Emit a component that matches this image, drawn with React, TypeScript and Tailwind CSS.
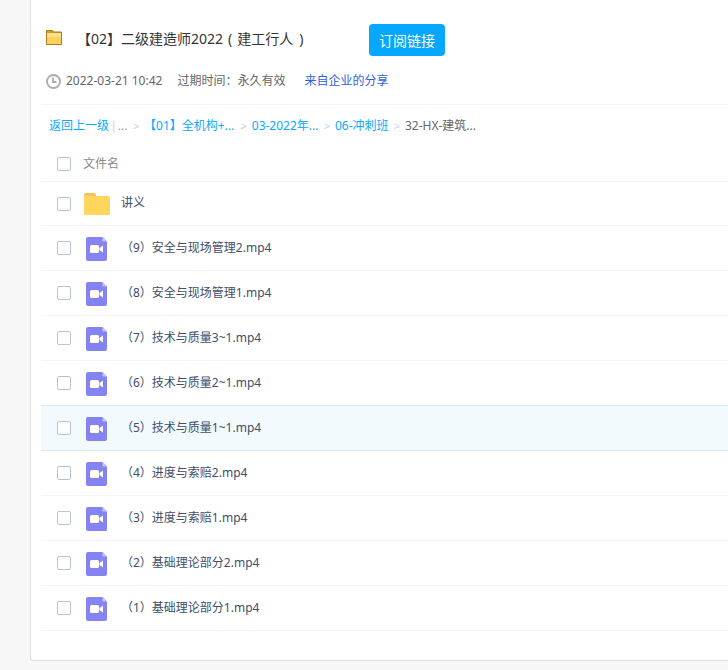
import React from 'react'

const files = [
  '（9）安全与现场管理2.mp4',
  '（8）安全与现场管理1.mp4',
  '（7）技术与质量3~1.mp4',
  '（6）技术与质量2~1.mp4',
  '（5）技术与质量1~1.mp4',
  '（4）进度与索赔2.mp4',
  '（3）进度与索赔1.mp4',
  '（2）基础理论部分2.mp4',
  '（1）基础理论部分1.mp4',
]

const Check = () => (
  <span className="block w-[14px] h-[14px] shrink-0 rounded-[2px] border border-[#b9c5d2] bg-white" />
)

const FolderBig = () => (
  <svg width="26" height="22" viewBox="0 0 26 22" className="shrink-0">
    <path d="M0 2a2 2 0 0 1 2-2h8a2 2 0 0 1 2 2v2H0z" fill="#f2c55c" />
    <rect x="0" y="3" width="26" height="19" rx="1.5" fill="#ffd65c" />
  </svg>
)

const FolderSmall = () => (
  <svg width="16" height="15" viewBox="0 0 16 15" className="shrink-0 -mt-[5px]">
    <path d="M0.5 0.5h6l1 1.5h8v12.5h-15z" fill="#d99a1f" stroke="#b07a18" />
    <rect x="1" y="3" width="14" height="11" fill="#fbd25f" />
    <rect x="1" y="3" width="14" height="4" fill="#fde08a" />
  </svg>
)

const VideoFile = () => (
  <svg width="21" height="24" viewBox="0 0 21 24" className="shrink-0 mt-[2px]">
    <path d="M2 0h14.500L21 4.500V22a2 2 0 0 1-2 2H2a2 2 0 0 1-2-2V2a2 2 0 0 1 2-2z" fill="#8583f2" />
    <path d="M16.500 0L21 4.500h-4.500z" fill="#c3c2f8" />
    <rect x="4" y="8" width="9" height="8" rx="1.500" fill="#fff" />
    <path d="M13.500 11l3.500-2.500v7L13.500 13z" fill="#fff" />
  </svg>
)

const ClockIcon = () => (
  <svg width="15" height="15" viewBox="0 0 15 15" fill="none" stroke="#aaa" strokeWidth="1.800" className="shrink-0">
    <circle cx="7.500" cy="7.500" r="6.500" />
    <path d="M7 3.500v4.500h3.500" />
  </svg>
)

const Sep = () => <span className="font-['Liberation_Sans'] text-[#c5d3e6] text-[11px] mx-[5px]">&gt;</span>

export default function App() {
  return (
    <div className="w-[728px] h-[670px] overflow-hidden bg-[#f7f7f7] pl-[30px] pb-[9px] font-['Noto_Sans','Noto_Sans_CJK_SC',sans-serif]">
      <div className="w-[760px] h-full bg-white border-l border-b border-[#e0e0e0] rounded-bl-[3px] pl-[10px]">
        <div className="h-[105px] pl-[5px] border-b border-[#f2f4f7] flex flex-col">
          <div className="flex items-center pt-[24px] h-[56px]">
            <FolderSmall />
            <span className="ml-[15px] w-[292px] -mt-[2px] text-[14px] leading-[30px] text-[#333]">
              【02】二级建造师2022
              <span className="ml-[5px]">(</span>
              <span className="ml-[5px]">建工行人</span>
              <span className="ml-[6px]">)</span>
            </span>
            <button className="w-[76px] h-[32px] rounded-[4px] bg-[#06a7ff] text-white text-[14px] pt-[1px]">订阅链接</button>
          </div>
          <div className="flex items-center mt-[15px] text-[12px] leading-[20px] text-[#666]">
            <ClockIcon />
            <span className="ml-[5px]">2022-03-21 10:42</span>
            <span className="ml-[15px]">过期时间：永久有效</span>
            <span className="ml-[19px] text-[#2f5fe0]">来自企业的分享</span>
          </div>
        </div>
        <div className="h-[36px] pl-[8px] pt-[6px] flex items-center text-[12px] text-[#09aaff]">
          <span>返回上一级</span>
          <span className="font-['Liberation_Sans'] text-[#c5d3e6] ml-[3px] mr-[2.5px]">|</span>
          <span className="font-['Liberation_Sans'] text-[#888]">...</span>
          <Sep />
          <span className="mr-[1px]">【01】全机构+...</span>
          <Sep />
          <span>03-2022年...</span>
          <Sep />
          <span>06-冲刺班</span>
          <Sep />
          <span className="text-[#666]">32-HX-建筑...</span>
        </div>
        <div className="h-[41px] pl-[16px] pt-[5px] flex items-center border-b border-[#f2f4f7] text-[12px] text-[#888]">
          <Check />
          <span className="ml-[12px]">文件名</span>
        </div>
        <div className="h-[44px] pl-[16px] flex items-center border-b border-[#f2f4f7] text-[12px] text-[#424e67]">
          <Check />
          <span className="ml-[13px] flex"><FolderBig /></span>
          <span className="ml-[11px] -mt-[2px]">讲义</span>
        </div>
        {files.map((name, i) => (
          <div
            key={name}
            className={i === 4
              ? 'h-[46px] pl-[16px] flex items-center border-y border-[#d4edfb] -mt-px bg-[#f2fafe] text-[12px] text-[#424e67]'
              : 'h-[45px] pl-[16px] flex items-center border-b border-[#f2f4f7] text-[12px] text-[#424e67]'}
          >
            <Check />
            <span className="ml-[15px] flex"><VideoFile /></span>
            <span className="ml-[14px]">{name}</span>
          </div>
        ))}
      </div>
    </div>
  )
}
